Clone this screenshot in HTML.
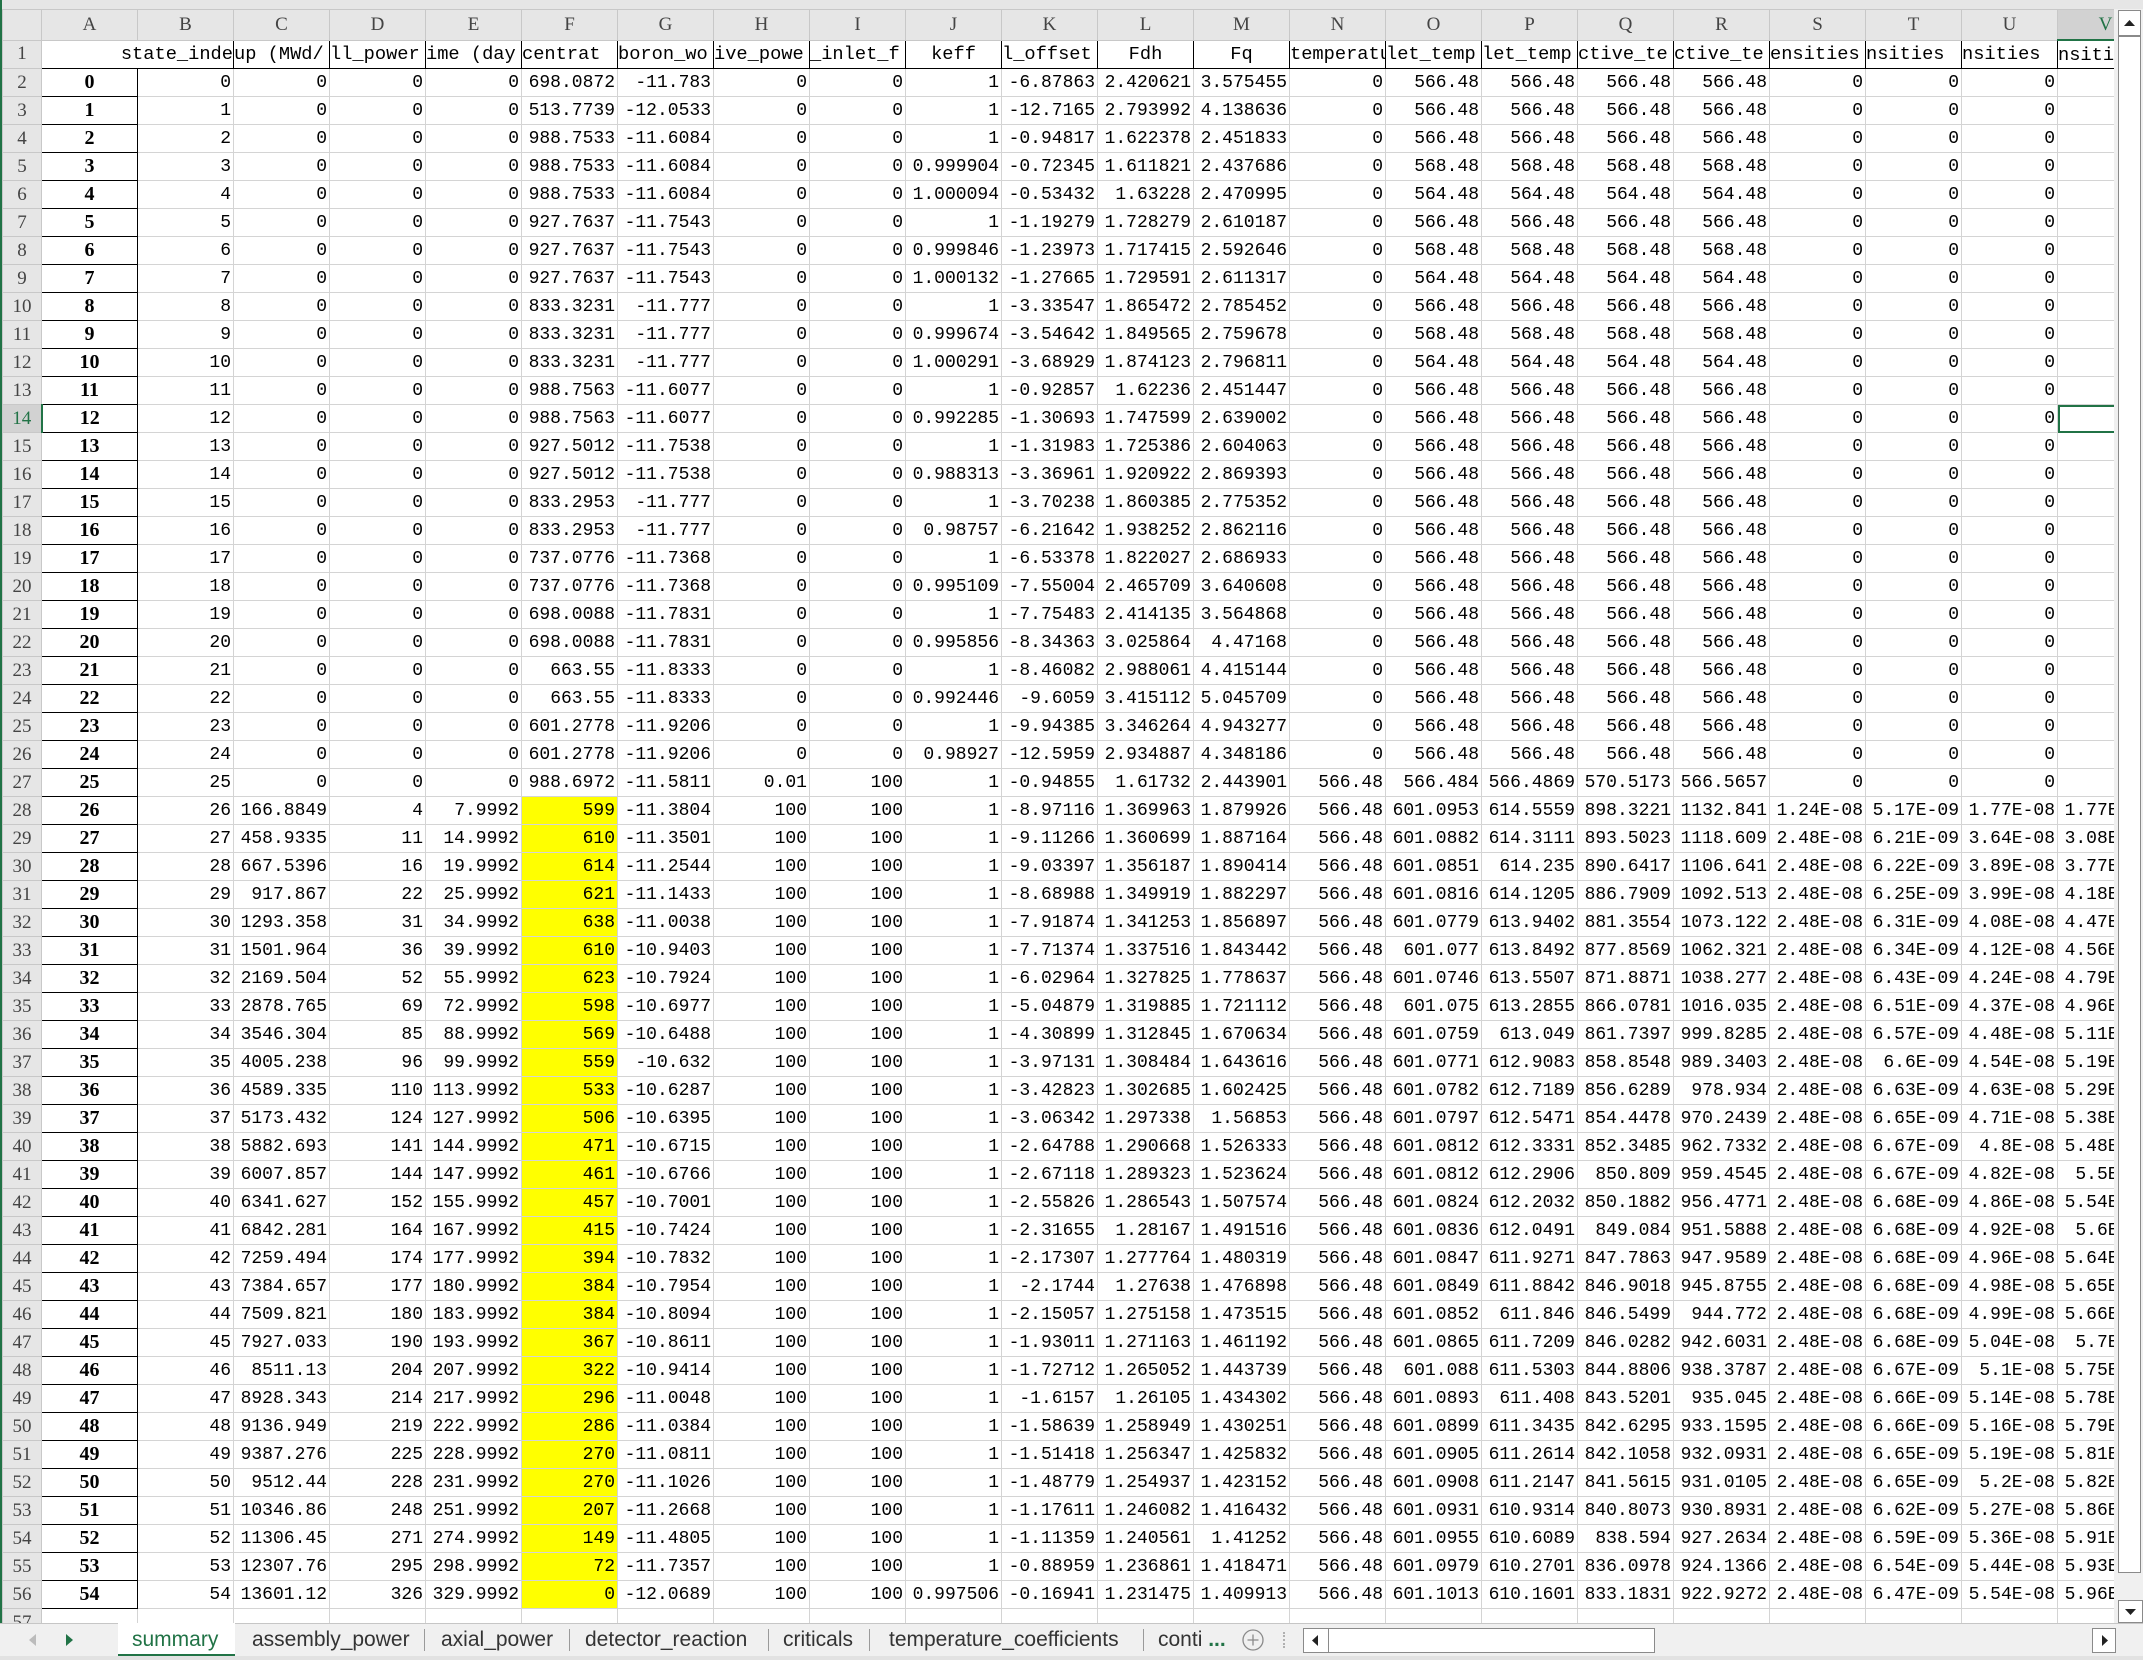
<!DOCTYPE html>
<html><head><meta charset="utf-8">
<style>
html,body{margin:0;padding:0;}
body{width:2143px;height:1660px;background:#e6e6e6;position:relative;overflow:hidden;font-family:"Liberation Serif",serif;}
#strip{position:absolute;left:0;top:0;width:2px;height:1660px;background:#217346;}
#grid{position:absolute;left:2px;top:9px;width:2112px;height:1614px;overflow:hidden;background:#fff;}
table{border-collapse:collapse;table-layout:fixed;width:2151px;}
td{padding:0 2px;overflow:hidden;white-space:nowrap;text-align:right;border:1px solid #d4d4d4;font:18px "Liberation Mono",monospace;color:#000;height:27px;}
th{font:19px "Liberation Serif",serif;color:#444;background:#e6e6e6;border:1px solid #c8c8c8;font-weight:normal;padding:0;overflow:hidden;white-space:nowrap;text-align:center;}
tr{height:28px;}
tr.hd{height:30px;}
tr.hd th{height:29px;}
td.a{font:bold 20px "Liberation Serif",serif;text-align:center;border:1px solid #000;}
td.h{border:1px solid #000;border-bottom:1px solid #000;text-align:left;padding:0;font-size:18.7px;}
td.c{text-align:center;}
td.r{text-align:right;}
td.y{background:#ffff00;}
td.s{outline:2px solid #217346;outline-offset:-2px;}
th.sel{background:#d2d2d2;color:#217346;}
th.vs{background:#d2d2d2;color:#217346;border-bottom:2px solid #217346;}
#tabs{position:absolute;left:0;top:1623px;width:2143px;height:33px;background:#f0f0f0;border-top:1px solid #c6c6c6;box-sizing:border-box;}
#bot{position:absolute;left:0;top:1656px;width:2143px;height:4px;background:#e2e2e2;}
.tl{position:absolute;top:4px;font:21px "Liberation Sans",sans-serif;color:#333;white-space:nowrap;}
.sep{position:absolute;top:5px;width:1px;height:22px;background:#9a9a9a;}
#vsb{position:absolute;left:2114px;top:9px;width:29px;height:1614px;background:#f0f0f0;}
.box{position:absolute;background:#fff;border:1px solid #8a8a8a;box-sizing:border-box;}
</style></head><body>
<div id="strip"></div>
<div id="grid">
<table>
<colgroup><col style="width:39px"><col style="width:96px"><col style="width:96px"><col style="width:96px"><col style="width:96px"><col style="width:96px"><col style="width:96px"><col style="width:96px"><col style="width:96px"><col style="width:96px"><col style="width:96px"><col style="width:96px"><col style="width:96px"><col style="width:96px"><col style="width:96px"><col style="width:96px"><col style="width:96px"><col style="width:96px"><col style="width:96px"><col style="width:96px"><col style="width:96px"><col style="width:96px"><col style="width:96px"></colgroup>
<tr class="hd"><th style="background:#e6e6e6"></th><th>A</th><th>B</th><th>C</th><th>D</th><th>E</th><th>F</th><th>G</th><th>H</th><th>I</th><th>J</th><th>K</th><th>L</th><th>M</th><th>N</th><th>O</th><th>P</th><th>Q</th><th>R</th><th>S</th><th>T</th><th>U</th><th class="vs">V</th></tr>
<tr><th>1</th><td class="h r" colspan="2">state_inde</td><td class="h">up (MWd/</td><td class="h">ll_power</td><td class="h">ime (day</td><td class="h">centrat</td><td class="h">boron_wo</td><td class="h">ive_powe</td><td class="h">_inlet_f</td><td class="h c">keff</td><td class="h">l_offset</td><td class="h c">Fdh</td><td class="h c">Fq</td><td class="h">temperatu</td><td class="h">let_temp</td><td class="h">let_temp</td><td class="h">ctive_te</td><td class="h">ctive_te</td><td class="h">ensities</td><td class="h">nsities</td><td class="h">nsities</td><td class="h">nsiti</td></tr>
<tr><th>2</th><td class="a">0</td><td>0</td><td>0</td><td>0</td><td>0</td><td>698.0872</td><td>-11.783</td><td>0</td><td>0</td><td>1</td><td>-6.87863</td><td>2.420621</td><td>3.575455</td><td>0</td><td>566.48</td><td>566.48</td><td>566.48</td><td>566.48</td><td>0</td><td>0</td><td>0</td><td></td></tr>
<tr><th>3</th><td class="a">1</td><td>1</td><td>0</td><td>0</td><td>0</td><td>513.7739</td><td>-12.0533</td><td>0</td><td>0</td><td>1</td><td>-12.7165</td><td>2.793992</td><td>4.138636</td><td>0</td><td>566.48</td><td>566.48</td><td>566.48</td><td>566.48</td><td>0</td><td>0</td><td>0</td><td></td></tr>
<tr><th>4</th><td class="a">2</td><td>2</td><td>0</td><td>0</td><td>0</td><td>988.7533</td><td>-11.6084</td><td>0</td><td>0</td><td>1</td><td>-0.94817</td><td>1.622378</td><td>2.451833</td><td>0</td><td>566.48</td><td>566.48</td><td>566.48</td><td>566.48</td><td>0</td><td>0</td><td>0</td><td></td></tr>
<tr><th>5</th><td class="a">3</td><td>3</td><td>0</td><td>0</td><td>0</td><td>988.7533</td><td>-11.6084</td><td>0</td><td>0</td><td>0.999904</td><td>-0.72345</td><td>1.611821</td><td>2.437686</td><td>0</td><td>568.48</td><td>568.48</td><td>568.48</td><td>568.48</td><td>0</td><td>0</td><td>0</td><td></td></tr>
<tr><th>6</th><td class="a">4</td><td>4</td><td>0</td><td>0</td><td>0</td><td>988.7533</td><td>-11.6084</td><td>0</td><td>0</td><td>1.000094</td><td>-0.53432</td><td>1.63228</td><td>2.470995</td><td>0</td><td>564.48</td><td>564.48</td><td>564.48</td><td>564.48</td><td>0</td><td>0</td><td>0</td><td></td></tr>
<tr><th>7</th><td class="a">5</td><td>5</td><td>0</td><td>0</td><td>0</td><td>927.7637</td><td>-11.7543</td><td>0</td><td>0</td><td>1</td><td>-1.19279</td><td>1.728279</td><td>2.610187</td><td>0</td><td>566.48</td><td>566.48</td><td>566.48</td><td>566.48</td><td>0</td><td>0</td><td>0</td><td></td></tr>
<tr><th>8</th><td class="a">6</td><td>6</td><td>0</td><td>0</td><td>0</td><td>927.7637</td><td>-11.7543</td><td>0</td><td>0</td><td>0.999846</td><td>-1.23973</td><td>1.717415</td><td>2.592646</td><td>0</td><td>568.48</td><td>568.48</td><td>568.48</td><td>568.48</td><td>0</td><td>0</td><td>0</td><td></td></tr>
<tr><th>9</th><td class="a">7</td><td>7</td><td>0</td><td>0</td><td>0</td><td>927.7637</td><td>-11.7543</td><td>0</td><td>0</td><td>1.000132</td><td>-1.27665</td><td>1.729591</td><td>2.611317</td><td>0</td><td>564.48</td><td>564.48</td><td>564.48</td><td>564.48</td><td>0</td><td>0</td><td>0</td><td></td></tr>
<tr><th>10</th><td class="a">8</td><td>8</td><td>0</td><td>0</td><td>0</td><td>833.3231</td><td>-11.777</td><td>0</td><td>0</td><td>1</td><td>-3.33547</td><td>1.865472</td><td>2.785452</td><td>0</td><td>566.48</td><td>566.48</td><td>566.48</td><td>566.48</td><td>0</td><td>0</td><td>0</td><td></td></tr>
<tr><th>11</th><td class="a">9</td><td>9</td><td>0</td><td>0</td><td>0</td><td>833.3231</td><td>-11.777</td><td>0</td><td>0</td><td>0.999674</td><td>-3.54642</td><td>1.849565</td><td>2.759678</td><td>0</td><td>568.48</td><td>568.48</td><td>568.48</td><td>568.48</td><td>0</td><td>0</td><td>0</td><td></td></tr>
<tr><th>12</th><td class="a">10</td><td>10</td><td>0</td><td>0</td><td>0</td><td>833.3231</td><td>-11.777</td><td>0</td><td>0</td><td>1.000291</td><td>-3.68929</td><td>1.874123</td><td>2.796811</td><td>0</td><td>564.48</td><td>564.48</td><td>564.48</td><td>564.48</td><td>0</td><td>0</td><td>0</td><td></td></tr>
<tr><th>13</th><td class="a">11</td><td>11</td><td>0</td><td>0</td><td>0</td><td>988.7563</td><td>-11.6077</td><td>0</td><td>0</td><td>1</td><td>-0.92857</td><td>1.62236</td><td>2.451447</td><td>0</td><td>566.48</td><td>566.48</td><td>566.48</td><td>566.48</td><td>0</td><td>0</td><td>0</td><td></td></tr>
<tr><th class="sel" style="border-right:2px solid #217346">14</th><td class="a">12</td><td>12</td><td>0</td><td>0</td><td>0</td><td>988.7563</td><td>-11.6077</td><td>0</td><td>0</td><td>0.992285</td><td>-1.30693</td><td>1.747599</td><td>2.639002</td><td>0</td><td>566.48</td><td>566.48</td><td>566.48</td><td>566.48</td><td>0</td><td>0</td><td>0</td><td class="s"></td></tr>
<tr><th>15</th><td class="a">13</td><td>13</td><td>0</td><td>0</td><td>0</td><td>927.5012</td><td>-11.7538</td><td>0</td><td>0</td><td>1</td><td>-1.31983</td><td>1.725386</td><td>2.604063</td><td>0</td><td>566.48</td><td>566.48</td><td>566.48</td><td>566.48</td><td>0</td><td>0</td><td>0</td><td></td></tr>
<tr><th>16</th><td class="a">14</td><td>14</td><td>0</td><td>0</td><td>0</td><td>927.5012</td><td>-11.7538</td><td>0</td><td>0</td><td>0.988313</td><td>-3.36961</td><td>1.920922</td><td>2.869393</td><td>0</td><td>566.48</td><td>566.48</td><td>566.48</td><td>566.48</td><td>0</td><td>0</td><td>0</td><td></td></tr>
<tr><th>17</th><td class="a">15</td><td>15</td><td>0</td><td>0</td><td>0</td><td>833.2953</td><td>-11.777</td><td>0</td><td>0</td><td>1</td><td>-3.70238</td><td>1.860385</td><td>2.775352</td><td>0</td><td>566.48</td><td>566.48</td><td>566.48</td><td>566.48</td><td>0</td><td>0</td><td>0</td><td></td></tr>
<tr><th>18</th><td class="a">16</td><td>16</td><td>0</td><td>0</td><td>0</td><td>833.2953</td><td>-11.777</td><td>0</td><td>0</td><td>0.98757</td><td>-6.21642</td><td>1.938252</td><td>2.862116</td><td>0</td><td>566.48</td><td>566.48</td><td>566.48</td><td>566.48</td><td>0</td><td>0</td><td>0</td><td></td></tr>
<tr><th>19</th><td class="a">17</td><td>17</td><td>0</td><td>0</td><td>0</td><td>737.0776</td><td>-11.7368</td><td>0</td><td>0</td><td>1</td><td>-6.53378</td><td>1.822027</td><td>2.686933</td><td>0</td><td>566.48</td><td>566.48</td><td>566.48</td><td>566.48</td><td>0</td><td>0</td><td>0</td><td></td></tr>
<tr><th>20</th><td class="a">18</td><td>18</td><td>0</td><td>0</td><td>0</td><td>737.0776</td><td>-11.7368</td><td>0</td><td>0</td><td>0.995109</td><td>-7.55004</td><td>2.465709</td><td>3.640608</td><td>0</td><td>566.48</td><td>566.48</td><td>566.48</td><td>566.48</td><td>0</td><td>0</td><td>0</td><td></td></tr>
<tr><th>21</th><td class="a">19</td><td>19</td><td>0</td><td>0</td><td>0</td><td>698.0088</td><td>-11.7831</td><td>0</td><td>0</td><td>1</td><td>-7.75483</td><td>2.414135</td><td>3.564868</td><td>0</td><td>566.48</td><td>566.48</td><td>566.48</td><td>566.48</td><td>0</td><td>0</td><td>0</td><td></td></tr>
<tr><th>22</th><td class="a">20</td><td>20</td><td>0</td><td>0</td><td>0</td><td>698.0088</td><td>-11.7831</td><td>0</td><td>0</td><td>0.995856</td><td>-8.34363</td><td>3.025864</td><td>4.47168</td><td>0</td><td>566.48</td><td>566.48</td><td>566.48</td><td>566.48</td><td>0</td><td>0</td><td>0</td><td></td></tr>
<tr><th>23</th><td class="a">21</td><td>21</td><td>0</td><td>0</td><td>0</td><td>663.55</td><td>-11.8333</td><td>0</td><td>0</td><td>1</td><td>-8.46082</td><td>2.988061</td><td>4.415144</td><td>0</td><td>566.48</td><td>566.48</td><td>566.48</td><td>566.48</td><td>0</td><td>0</td><td>0</td><td></td></tr>
<tr><th>24</th><td class="a">22</td><td>22</td><td>0</td><td>0</td><td>0</td><td>663.55</td><td>-11.8333</td><td>0</td><td>0</td><td>0.992446</td><td>-9.6059</td><td>3.415112</td><td>5.045709</td><td>0</td><td>566.48</td><td>566.48</td><td>566.48</td><td>566.48</td><td>0</td><td>0</td><td>0</td><td></td></tr>
<tr><th>25</th><td class="a">23</td><td>23</td><td>0</td><td>0</td><td>0</td><td>601.2778</td><td>-11.9206</td><td>0</td><td>0</td><td>1</td><td>-9.94385</td><td>3.346264</td><td>4.943277</td><td>0</td><td>566.48</td><td>566.48</td><td>566.48</td><td>566.48</td><td>0</td><td>0</td><td>0</td><td></td></tr>
<tr><th>26</th><td class="a">24</td><td>24</td><td>0</td><td>0</td><td>0</td><td>601.2778</td><td>-11.9206</td><td>0</td><td>0</td><td>0.98927</td><td>-12.5959</td><td>2.934887</td><td>4.348186</td><td>0</td><td>566.48</td><td>566.48</td><td>566.48</td><td>566.48</td><td>0</td><td>0</td><td>0</td><td></td></tr>
<tr><th>27</th><td class="a">25</td><td>25</td><td>0</td><td>0</td><td>0</td><td>988.6972</td><td>-11.5811</td><td>0.01</td><td>100</td><td>1</td><td>-0.94855</td><td>1.61732</td><td>2.443901</td><td>566.48</td><td>566.484</td><td>566.4869</td><td>570.5173</td><td>566.5657</td><td>0</td><td>0</td><td>0</td><td></td></tr>
<tr><th>28</th><td class="a">26</td><td>26</td><td>166.8849</td><td>4</td><td>7.9992</td><td class="y">599</td><td>-11.3804</td><td>100</td><td>100</td><td>1</td><td>-8.97116</td><td>1.369963</td><td>1.879926</td><td>566.48</td><td>601.0953</td><td>614.5559</td><td>898.3221</td><td>1132.841</td><td>1.24E-08</td><td>5.17E-09</td><td>1.77E-08</td><td>1.77E-08</td></tr>
<tr><th>29</th><td class="a">27</td><td>27</td><td>458.9335</td><td>11</td><td>14.9992</td><td class="y">610</td><td>-11.3501</td><td>100</td><td>100</td><td>1</td><td>-9.11266</td><td>1.360699</td><td>1.887164</td><td>566.48</td><td>601.0882</td><td>614.3111</td><td>893.5023</td><td>1118.609</td><td>2.48E-08</td><td>6.21E-09</td><td>3.64E-08</td><td>3.08E-08</td></tr>
<tr><th>30</th><td class="a">28</td><td>28</td><td>667.5396</td><td>16</td><td>19.9992</td><td class="y">614</td><td>-11.2544</td><td>100</td><td>100</td><td>1</td><td>-9.03397</td><td>1.356187</td><td>1.890414</td><td>566.48</td><td>601.0851</td><td>614.235</td><td>890.6417</td><td>1106.641</td><td>2.48E-08</td><td>6.22E-09</td><td>3.89E-08</td><td>3.77E-08</td></tr>
<tr><th>31</th><td class="a">29</td><td>29</td><td>917.867</td><td>22</td><td>25.9992</td><td class="y">621</td><td>-11.1433</td><td>100</td><td>100</td><td>1</td><td>-8.68988</td><td>1.349919</td><td>1.882297</td><td>566.48</td><td>601.0816</td><td>614.1205</td><td>886.7909</td><td>1092.513</td><td>2.48E-08</td><td>6.25E-09</td><td>3.99E-08</td><td>4.18E-08</td></tr>
<tr><th>32</th><td class="a">30</td><td>30</td><td>1293.358</td><td>31</td><td>34.9992</td><td class="y">638</td><td>-11.0038</td><td>100</td><td>100</td><td>1</td><td>-7.91874</td><td>1.341253</td><td>1.856897</td><td>566.48</td><td>601.0779</td><td>613.9402</td><td>881.3554</td><td>1073.122</td><td>2.48E-08</td><td>6.31E-09</td><td>4.08E-08</td><td>4.47E-08</td></tr>
<tr><th>33</th><td class="a">31</td><td>31</td><td>1501.964</td><td>36</td><td>39.9992</td><td class="y">610</td><td>-10.9403</td><td>100</td><td>100</td><td>1</td><td>-7.71374</td><td>1.337516</td><td>1.843442</td><td>566.48</td><td>601.077</td><td>613.8492</td><td>877.8569</td><td>1062.321</td><td>2.48E-08</td><td>6.34E-09</td><td>4.12E-08</td><td>4.56E-08</td></tr>
<tr><th>34</th><td class="a">32</td><td>32</td><td>2169.504</td><td>52</td><td>55.9992</td><td class="y">623</td><td>-10.7924</td><td>100</td><td>100</td><td>1</td><td>-6.02964</td><td>1.327825</td><td>1.778637</td><td>566.48</td><td>601.0746</td><td>613.5507</td><td>871.8871</td><td>1038.277</td><td>2.48E-08</td><td>6.43E-09</td><td>4.24E-08</td><td>4.79E-08</td></tr>
<tr><th>35</th><td class="a">33</td><td>33</td><td>2878.765</td><td>69</td><td>72.9992</td><td class="y">598</td><td>-10.6977</td><td>100</td><td>100</td><td>1</td><td>-5.04879</td><td>1.319885</td><td>1.721112</td><td>566.48</td><td>601.075</td><td>613.2855</td><td>866.0781</td><td>1016.035</td><td>2.48E-08</td><td>6.51E-09</td><td>4.37E-08</td><td>4.96E-08</td></tr>
<tr><th>36</th><td class="a">34</td><td>34</td><td>3546.304</td><td>85</td><td>88.9992</td><td class="y">569</td><td>-10.6488</td><td>100</td><td>100</td><td>1</td><td>-4.30899</td><td>1.312845</td><td>1.670634</td><td>566.48</td><td>601.0759</td><td>613.049</td><td>861.7397</td><td>999.8285</td><td>2.48E-08</td><td>6.57E-09</td><td>4.48E-08</td><td>5.11E-08</td></tr>
<tr><th>37</th><td class="a">35</td><td>35</td><td>4005.238</td><td>96</td><td>99.9992</td><td class="y">559</td><td>-10.632</td><td>100</td><td>100</td><td>1</td><td>-3.97131</td><td>1.308484</td><td>1.643616</td><td>566.48</td><td>601.0771</td><td>612.9083</td><td>858.8548</td><td>989.3403</td><td>2.48E-08</td><td>6.6E-09</td><td>4.54E-08</td><td>5.19E-08</td></tr>
<tr><th>38</th><td class="a">36</td><td>36</td><td>4589.335</td><td>110</td><td>113.9992</td><td class="y">533</td><td>-10.6287</td><td>100</td><td>100</td><td>1</td><td>-3.42823</td><td>1.302685</td><td>1.602425</td><td>566.48</td><td>601.0782</td><td>612.7189</td><td>856.6289</td><td>978.934</td><td>2.48E-08</td><td>6.63E-09</td><td>4.63E-08</td><td>5.29E-08</td></tr>
<tr><th>39</th><td class="a">37</td><td>37</td><td>5173.432</td><td>124</td><td>127.9992</td><td class="y">506</td><td>-10.6395</td><td>100</td><td>100</td><td>1</td><td>-3.06342</td><td>1.297338</td><td>1.56853</td><td>566.48</td><td>601.0797</td><td>612.5471</td><td>854.4478</td><td>970.2439</td><td>2.48E-08</td><td>6.65E-09</td><td>4.71E-08</td><td>5.38E-08</td></tr>
<tr><th>40</th><td class="a">38</td><td>38</td><td>5882.693</td><td>141</td><td>144.9992</td><td class="y">471</td><td>-10.6715</td><td>100</td><td>100</td><td>1</td><td>-2.64788</td><td>1.290668</td><td>1.526333</td><td>566.48</td><td>601.0812</td><td>612.3331</td><td>852.3485</td><td>962.7332</td><td>2.48E-08</td><td>6.67E-09</td><td>4.8E-08</td><td>5.48E-08</td></tr>
<tr><th>41</th><td class="a">39</td><td>39</td><td>6007.857</td><td>144</td><td>147.9992</td><td class="y">461</td><td>-10.6766</td><td>100</td><td>100</td><td>1</td><td>-2.67118</td><td>1.289323</td><td>1.523624</td><td>566.48</td><td>601.0812</td><td>612.2906</td><td>850.809</td><td>959.4545</td><td>2.48E-08</td><td>6.67E-09</td><td>4.82E-08</td><td>5.5E-08</td></tr>
<tr><th>42</th><td class="a">40</td><td>40</td><td>6341.627</td><td>152</td><td>155.9992</td><td class="y">457</td><td>-10.7001</td><td>100</td><td>100</td><td>1</td><td>-2.55826</td><td>1.286543</td><td>1.507574</td><td>566.48</td><td>601.0824</td><td>612.2032</td><td>850.1882</td><td>956.4771</td><td>2.48E-08</td><td>6.68E-09</td><td>4.86E-08</td><td>5.54E-08</td></tr>
<tr><th>43</th><td class="a">41</td><td>41</td><td>6842.281</td><td>164</td><td>167.9992</td><td class="y">415</td><td>-10.7424</td><td>100</td><td>100</td><td>1</td><td>-2.31655</td><td>1.28167</td><td>1.491516</td><td>566.48</td><td>601.0836</td><td>612.0491</td><td>849.084</td><td>951.5888</td><td>2.48E-08</td><td>6.68E-09</td><td>4.92E-08</td><td>5.6E-08</td></tr>
<tr><th>44</th><td class="a">42</td><td>42</td><td>7259.494</td><td>174</td><td>177.9992</td><td class="y">394</td><td>-10.7832</td><td>100</td><td>100</td><td>1</td><td>-2.17307</td><td>1.277764</td><td>1.480319</td><td>566.48</td><td>601.0847</td><td>611.9271</td><td>847.7863</td><td>947.9589</td><td>2.48E-08</td><td>6.68E-09</td><td>4.96E-08</td><td>5.64E-08</td></tr>
<tr><th>45</th><td class="a">43</td><td>43</td><td>7384.657</td><td>177</td><td>180.9992</td><td class="y">384</td><td>-10.7954</td><td>100</td><td>100</td><td>1</td><td>-2.1744</td><td>1.27638</td><td>1.476898</td><td>566.48</td><td>601.0849</td><td>611.8842</td><td>846.9018</td><td>945.8755</td><td>2.48E-08</td><td>6.68E-09</td><td>4.98E-08</td><td>5.65E-08</td></tr>
<tr><th>46</th><td class="a">44</td><td>44</td><td>7509.821</td><td>180</td><td>183.9992</td><td class="y">384</td><td>-10.8094</td><td>100</td><td>100</td><td>1</td><td>-2.15057</td><td>1.275158</td><td>1.473515</td><td>566.48</td><td>601.0852</td><td>611.846</td><td>846.5499</td><td>944.772</td><td>2.48E-08</td><td>6.68E-09</td><td>4.99E-08</td><td>5.66E-08</td></tr>
<tr><th>47</th><td class="a">45</td><td>45</td><td>7927.033</td><td>190</td><td>193.9992</td><td class="y">367</td><td>-10.8611</td><td>100</td><td>100</td><td>1</td><td>-1.93011</td><td>1.271163</td><td>1.461192</td><td>566.48</td><td>601.0865</td><td>611.7209</td><td>846.0282</td><td>942.6031</td><td>2.48E-08</td><td>6.68E-09</td><td>5.04E-08</td><td>5.7E-08</td></tr>
<tr><th>48</th><td class="a">46</td><td>46</td><td>8511.13</td><td>204</td><td>207.9992</td><td class="y">322</td><td>-10.9414</td><td>100</td><td>100</td><td>1</td><td>-1.72712</td><td>1.265052</td><td>1.443739</td><td>566.48</td><td>601.088</td><td>611.5303</td><td>844.8806</td><td>938.3787</td><td>2.48E-08</td><td>6.67E-09</td><td>5.1E-08</td><td>5.75E-08</td></tr>
<tr><th>49</th><td class="a">47</td><td>47</td><td>8928.343</td><td>214</td><td>217.9992</td><td class="y">296</td><td>-11.0048</td><td>100</td><td>100</td><td>1</td><td>-1.6157</td><td>1.26105</td><td>1.434302</td><td>566.48</td><td>601.0893</td><td>611.408</td><td>843.5201</td><td>935.045</td><td>2.48E-08</td><td>6.66E-09</td><td>5.14E-08</td><td>5.78E-08</td></tr>
<tr><th>50</th><td class="a">48</td><td>48</td><td>9136.949</td><td>219</td><td>222.9992</td><td class="y">286</td><td>-11.0384</td><td>100</td><td>100</td><td>1</td><td>-1.58639</td><td>1.258949</td><td>1.430251</td><td>566.48</td><td>601.0899</td><td>611.3435</td><td>842.6295</td><td>933.1595</td><td>2.48E-08</td><td>6.66E-09</td><td>5.16E-08</td><td>5.79E-08</td></tr>
<tr><th>51</th><td class="a">49</td><td>49</td><td>9387.276</td><td>225</td><td>228.9992</td><td class="y">270</td><td>-11.0811</td><td>100</td><td>100</td><td>1</td><td>-1.51418</td><td>1.256347</td><td>1.425832</td><td>566.48</td><td>601.0905</td><td>611.2614</td><td>842.1058</td><td>932.0931</td><td>2.48E-08</td><td>6.65E-09</td><td>5.19E-08</td><td>5.81E-08</td></tr>
<tr><th>52</th><td class="a">50</td><td>50</td><td>9512.44</td><td>228</td><td>231.9992</td><td class="y">270</td><td>-11.1026</td><td>100</td><td>100</td><td>1</td><td>-1.48779</td><td>1.254937</td><td>1.423152</td><td>566.48</td><td>601.0908</td><td>611.2147</td><td>841.5615</td><td>931.0105</td><td>2.48E-08</td><td>6.65E-09</td><td>5.2E-08</td><td>5.82E-08</td></tr>
<tr><th>53</th><td class="a">51</td><td>51</td><td>10346.86</td><td>248</td><td>251.9992</td><td class="y">207</td><td>-11.2668</td><td>100</td><td>100</td><td>1</td><td>-1.17611</td><td>1.246082</td><td>1.416432</td><td>566.48</td><td>601.0931</td><td>610.9314</td><td>840.8073</td><td>930.8931</td><td>2.48E-08</td><td>6.62E-09</td><td>5.27E-08</td><td>5.86E-08</td></tr>
<tr><th>54</th><td class="a">52</td><td>52</td><td>11306.45</td><td>271</td><td>274.9992</td><td class="y">149</td><td>-11.4805</td><td>100</td><td>100</td><td>1</td><td>-1.11359</td><td>1.240561</td><td>1.41252</td><td>566.48</td><td>601.0955</td><td>610.6089</td><td>838.594</td><td>927.2634</td><td>2.48E-08</td><td>6.59E-09</td><td>5.36E-08</td><td>5.91E-08</td></tr>
<tr><th>55</th><td class="a">53</td><td>53</td><td>12307.76</td><td>295</td><td>298.9992</td><td class="y">72</td><td>-11.7357</td><td>100</td><td>100</td><td>1</td><td>-0.88959</td><td>1.236861</td><td>1.418471</td><td>566.48</td><td>601.0979</td><td>610.2701</td><td>836.0978</td><td>924.1366</td><td>2.48E-08</td><td>6.54E-09</td><td>5.44E-08</td><td>5.93E-08</td></tr>
<tr><th>56</th><td class="a">54</td><td>54</td><td>13601.12</td><td>326</td><td>329.9992</td><td class="y">0</td><td>-12.0689</td><td>100</td><td>100</td><td>0.997506</td><td>-0.16941</td><td>1.231475</td><td>1.409913</td><td>566.48</td><td>601.1013</td><td>610.1601</td><td>833.1831</td><td>922.9272</td><td>2.48E-08</td><td>6.47E-09</td><td>5.54E-08</td><td>5.96E-08</td></tr>
<tr><th>57</th><td></td><td></td><td></td><td></td><td></td><td></td><td></td><td></td><td></td><td></td><td></td><td></td><td></td><td></td><td></td><td></td><td></td><td></td><td></td><td></td><td></td><td></td></tr>
</table>
</div>

<div id="vsb">
  <div class="box" style="left:4px;top:1px;width:23px;height:26px;"><svg width="21" height="24" viewBox="0 0 21 24"><path d="M5 15 L10.5 9 L16 15 Z" fill="#222"/></svg></div>
  <div class="box" style="left:4px;top:27px;width:23px;height:1537px;"></div>
  <div class="box" style="left:4px;top:1591px;width:25px;height:23px;"><svg width="23" height="21" viewBox="0 0 23 21"><path d="M6 8 L17 8 L11.5 14 Z" fill="#222"/></svg></div>
</div>

<div id="tabs">
  <svg style="position:absolute;left:26px;top:8px" width="14" height="16" viewBox="0 0 14 16"><path d="M10 2 L3 8 L10 14 Z" fill="#bcbcbc"/></svg>
  <svg style="position:absolute;left:62px;top:8px" width="14" height="16" viewBox="0 0 14 16"><path d="M4 2 L11 8 L4 14 Z" fill="#217346"/></svg>
  <div style="position:absolute;left:118px;top:-1px;width:117px;height:31px;background:#fff;border-bottom:2px solid #217346;"></div>
  <div class="tl" style="left:132px;color:#217346;">summary</div>
  <div class="tl" style="left:252px;">assembly_power</div>
  <div class="sep" style="left:424px;"></div>
  <div class="tl" style="left:441px;">axial_power</div>
  <div class="sep" style="left:569px;"></div>
  <div class="tl" style="left:585px;">detector_reaction</div>
  <div class="sep" style="left:768px;"></div>
  <div class="tl" style="left:783px;">criticals</div>
  <div class="sep" style="left:869px;"></div>
  <div class="tl" style="left:889px;">temperature_coefficients</div>
  <div class="sep" style="left:1143px;"></div>
  <div class="tl" style="left:1158px;">conti <span style="color:#217346;font-weight:bold;">...</span></div>
  <svg style="position:absolute;left:1241px;top:4px" width="24" height="24" viewBox="0 0 24 24"><circle cx="12" cy="12" r="10" fill="none" stroke="#8a8a8a" stroke-width="1.3"/><path d="M12 6.5 V17.5 M6.5 12 H17.5" stroke="#8a8a8a" stroke-width="1.3"/></svg>
  <div style="position:absolute;left:1283px;top:8px;width:2px;height:16px;border-left:2px dotted #b0b0b0;"></div>
  <div class="box" style="left:1303px;top:4px;width:26px;height:25px;"><svg width="24" height="23" viewBox="0 0 24 23"><path d="M14 6 L8 11.5 L14 17 Z" fill="#222"/></svg></div>
  <div class="box" style="left:1328px;top:4px;width:327px;height:25px;"></div>
  <div class="box" style="left:2092px;top:4px;width:24px;height:25px;"><svg width="22" height="23" viewBox="0 0 22 23"><path d="M9 6 L15 11.5 L9 17 Z" fill="#222"/></svg></div>
</div>
<div id="bot"></div>
</body></html>
